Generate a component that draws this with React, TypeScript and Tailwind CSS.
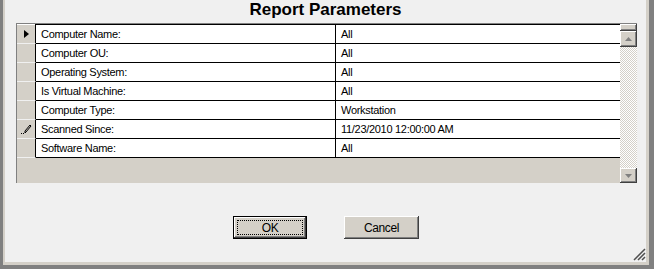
import React from "react";

const rows: [string, string][] = [
	["Computer Name:", "All"],
	["Computer OU:", "All"],
	["Operating System:", "All"],
	["Is Virtual Machine:", "All"],
	["Computer Type:", "Workstation"],
	["Scanned Since:", "11/23/2010 12:00:00 AM"],
	["Software Name:", "All"],
];

const raised =
	"bg-[#d4d0c8] shadow-[inset_-1px_-1px_#404040,inset_1px_1px_#ffffff,inset_-2px_-2px_#808080]";

const Pencil = () => (
	<svg width="12" height="12" viewBox="0 0 12 12" shapeRendering="crispEdges">
		<rect x="1" y="10" width="1" height="1" fill="#000" />
		<rect x="3" y="10" width="1" height="1" fill="#000" />
		<path d="M5 10 L5 8 L10 2 L11 3 L6 9 Z" fill="none" stroke="#000" strokeWidth="1" shapeRendering="auto" />
	</svg>
);

const Arrow = () => (
	<svg width="5" height="8" viewBox="0 0 5 8">
		<polygon points="0,0 5,4 0,8" fill="#000" />
	</svg>
);

export default function App() {
	return (
		<div className="w-[654px] h-[269px] bg-[#808080] pl-[3px] pr-[5px] pb-[4px] flex font-['Liberation_Sans',Arial,sans-serif]">
			<div className="flex-1 bg-[#d4d0c8] pl-[2px] pr-[3px] pb-[3px] flex">
				<div className="flex-1 bg-[#f0f0f0] relative flex flex-col">
					<div className="h-[23px] leading-[20px] text-[17px] font-bold text-center text-black">
						Report Parameters
					</div>

					<div className="ml-[11px] w-[621px] h-[160px] border-t border-l border-[#808080] flex">
						<div className="flex-1 bg-[#d4d0c8] flex flex-col">
							<div className="flex h-[1px]">
								<div className="w-[19px] bg-[#ffffff] border-r border-black" />
								<div className="flex-1 bg-black" />
							</div>
							{rows.map(([label, value], i) => (
								<div key={label} className="flex h-[19px]">
									<div className="w-[19px] border-r border-black border-b border-b-[#f0f0f0] flex items-center justify-center">
										{i === 0 && <Arrow />}
										{i === 5 && <Pencil />}
									</div>
									<div className="w-[300px] bg-white border-r border-b border-black text-[11px] tracking-[-0.3px] leading-[18px] pl-[5px] text-black">
										{label}
									</div>
									<div className="flex-1 bg-white border-b border-black text-[11px] tracking-[-0.3px] leading-[18px] pl-[5px] text-black">
										{value}
									</div>
								</div>
							))}
						</div>
						<div className="w-[17px] flex flex-col">
							<div className={`h-[7px] ${raised}`} />
							<div className={`h-[16px] ${raised} flex items-center justify-center`}>
								<svg width="7" height="4" viewBox="0 0 7 4">
									<polygon points="3.5,0 7,4 0,4" fill="#808080" />
								</svg>
							</div>
							<div className="flex-1 bg-[repeating-conic-gradient(#d4d0c8_0_25%,#ffffff_0_50%)] bg-[length:2px_2px]" />
							<div className={`h-[15px] ${raised} flex items-center justify-center`}>
								<svg width="7" height="4" viewBox="0 0 7 4">
									<polygon points="0,0 7,0 3.5,4" fill="#808080" />
								</svg>
							</div>
						</div>
					</div>

					<div className="mt-[33px] flex justify-center gap-[37px] pl-[1px]">
						<div className="w-[74px] h-[23px] border border-black">
							<div className={`w-full h-full ${raised} p-[3px]`}>
								<div className="w-full h-full border border-dotted border-black flex items-center justify-center text-[12px] tracking-[-0.4px] text-black">
									OK
								</div>
							</div>
						</div>
						<div className={`w-[75px] h-[23px] ${raised} flex items-center justify-center text-[12px] tracking-[-0.4px] text-black`}>
							Cancel
						</div>
					</div>

					<svg className="absolute right-0 bottom-[1px]" width="13" height="13" viewBox="0 0 13 13">
						<path d="M12 1 L1 12 M12 5 L5 12 M12 9 L9 12" stroke="#505050" strokeWidth="1.5" />
					</svg>
				</div>
			</div>
		</div>
	);
}
